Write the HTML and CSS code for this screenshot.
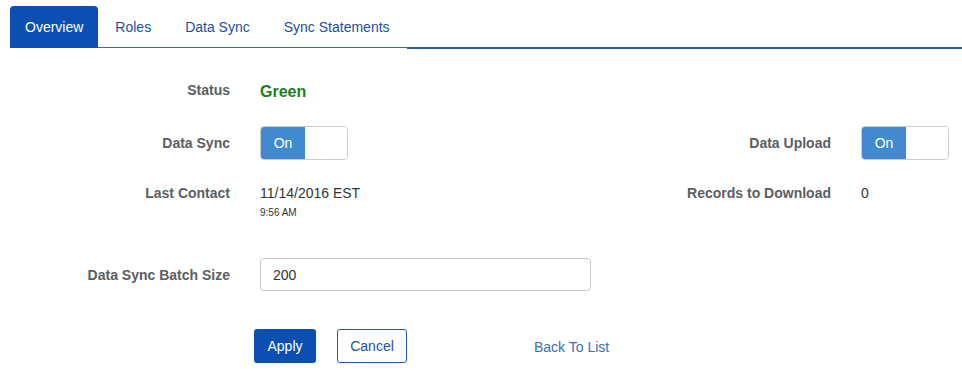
FILE: index.html
```html
<!DOCTYPE html>
<html>
    <head>
        <title>Sync Overview</title>
        <link rel="stylesheet" href="styles.css">
    </head>
    <body>
        <div class="tabs">
            <a class="tab active">Overview</a>
            <a class="tab">Roles</a>
            <a class="tab">Data Sync</a>
            <a class="tab">Sync Statements</a>
            <div class="tab-rest"></div>
        </div>
        <div class="form">
            <div class="row status-row">
                <label>Status</label>
                <span class="status-green">Green</span>
            </div>
            <div class="row">
                <label>Data Sync</label>
                <div class="toggle"><span class="toggle-on">On</span><span class="toggle-off"></span></div>
                <label>Data Upload</label>
                <div class="toggle"><span class="toggle-on">On</span><span class="toggle-off"></span></div>
            </div>
            <div class="row top-row">
                <label>Last Contact</label>
                <div class="value">
                    11/14/2016 EST
                    <div class="time">9:56 AM</div>
                </div>
                <label>Records to Download</label>
                <div class="value">0</div>
            </div>
            <div class="row batch-row">
                <label>Data Sync Batch Size</label>
                <input class="text-input" type="text" value="200">
            </div>
            <div class="actions">
                <button class="btn btn-primary">Apply</button>
                <button class="btn btn-default">Cancel</button>
                <a class="back-link">Back To List</a>
            </div>
        </div>
    </body>
</html>
```

FILE: styles.css
```css
body
{
    margin:0;
    font-family: 'Liberation Sans', Arial, sans-serif;
    font-size:14px;
    color:#333;
    background:white;
}
.tabs
{
    display:flex;
    align-items:flex-end;
    padding-top:6px;
    padding-left:10px;
}
.tab
{
    display:block;
    height:41px;
    line-height:42px;
    padding:0 17px;
    color:#1c4f9c;
    border-bottom:1px solid #3a6bb2;
    cursor:pointer;
}
.tab.active
{
    height:42px;
    padding:0 15px;
    background:#0b4fb3;
    color:white;
    border-bottom:none;
    border-radius:4px 4px 0 0;
}
.tab-rest
{
    flex:1;
    border-bottom:2px solid #2f60a9;
    margin-bottom:-1px;
}
.form
{
    padding-top:30px;
}
.row
{
    display:grid;
    grid-template-columns: 230px 311px 230px 1fr;
    column-gap:30px;
    align-items:center;
    margin-bottom:26px;
}
.row label
{
    text-align:right;
    font-weight:bold;
    color:#5b5e62;
    line-height:16px;
}
.status-row
{
    height:20px;
    margin-bottom:28px;
}
.status-green
{
    font-size:16px;
    font-weight:bold;
    color:#1a801a;
    padding-top:5px;
}
.toggle
{
    display:flex;
    width:86px;
    height:32px;
    border:1px solid #ccc;
    border-radius:4px;
    overflow:hidden;
}
.toggle-on
{
    width:44px;
    background:#418ad0;
    color:white;
    text-align:center;
    line-height:32px;
}
.toggle-off
{
    flex:1;
    background:white;
}
.top-row
{
    align-items:start;
    margin-top:-1px;
    margin-bottom:0;
    height:73px;
}
.value
{
    line-height:16px;
}
.time
{
    font-size:10px;
    line-height:12px;
    margin-top:6px;
}
.batch-row
{
    margin-bottom:38px;
}
.text-input
{
    width:331px;
    height:33px;
    box-sizing:border-box;
    border:1px solid #c8c8c8;
    border-radius:4px;
    padding:0 12px;
    font-family:inherit;
    font-size:14px;
    color:#333;
}
.actions
{
    display:flex;
    align-items:center;
    padding-left:254px;
}
.btn
{
    height:34px;
    font-family:inherit;
    font-size:14px;
    border-radius:3px;
    cursor:pointer;
}
.btn-primary
{
    width:62px;
    background:#0b4fb3;
    color:white;
    border:none;
}
.btn-default
{
    width:70px;
    margin-left:21px;
    background:white;
    color:#1c4f9c;
    border:1px solid #1c5bb0;
}
.back-link
{
    margin-left:127px;
    color:#3570b5;
    cursor:pointer;
    padding-top:2px;
}
```
